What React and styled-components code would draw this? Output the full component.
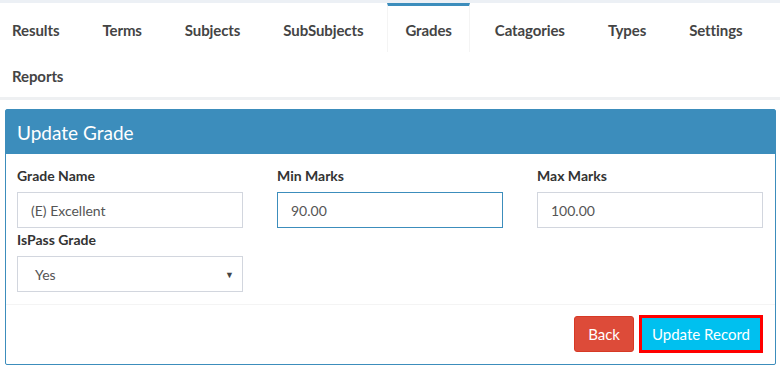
import React from "react";
import styled, { createGlobalStyle } from "styled-components";

const GlobalStyle = createGlobalStyle`
  body {
    margin: 0;
    background: #fff;
    font-family: Lato, "Liberation Sans", sans-serif;
    color: #333;
  }
`;

const Page = styled.div`
  width: 780px;
  height: 367px;
  overflow: hidden;
  border-top: 3px solid #ecf0f5;
  box-sizing: border-box;
`;

const Nav = styled.ul`
  list-style: none;
  margin: 0 0 0 -6px;
  padding: 0;
  display: flex;
  flex-wrap: wrap;
  border-bottom: 3px solid #eef0f2;
  width: 786px;
`;

const Tab = styled.li`
  height: ${p => (p.first ? "49px" : "45px")};
  padding: ${p => (p.first ? "1px" : "0")} 17px 0;
  margin-right: 7px;
  box-sizing: border-box;
  display: flex;
  align-items: center;
  font-size: 15px;
  font-weight: 700;
  letter-spacing: -0.1px;
  color: #444;
  border-top: 3px solid ${p => (p.active ? "#3c8dbc" : "transparent")};
  border-left: 1px solid ${p => (p.active ? "#f4f4f4" : "transparent")};
  border-right: 1px solid ${p => (p.active ? "#f4f4f4" : "transparent")};
  margin-left: ${p => (p.active ? "-1px" : "0")};
`;

const Panel = styled.section`
  margin: 9px 4px 0 5px;
  border: 1px solid #3c8dbc;
  border-radius: 2px;
  background: #fff;
`;

const PanelHeader = styled.h3`
  margin: 0;
  height: 44px;
  padding: 0 11px;
  display: flex;
  align-items: center;
  background: #3c8dbc;
  color: #fff;
  font-size: 19px;
  font-weight: 400;
`;

const PanelBody = styled.div`
  padding: 13px 12px 12px 11px;
  display: grid;
  grid-template-columns: repeat(3, 226px);
  column-gap: 34px;
  row-gap: 3px;
  border-bottom: 1px solid #f4f4f4;
`;

const Field = styled.div`
  display: flex;
  flex-direction: column;
`;

const Label = styled.label`
  font-size: 14px;
  font-weight: 700;
  color: #333;
  height: 17px;
  line-height: 17px;
  margin-bottom: 8px;
`;

const Input = styled.div`
  height: 36px;
  box-sizing: border-box;
  border: 1px solid ${p => (p.focused ? "#3c8dbc" : "#d2d6de")};
  padding: 0 13px;
  display: flex;
  align-items: center;
  justify-content: space-between;
  font-size: 14px;
  color: #555;
`;

const SelectValue = styled.span`
  padding-left: 4px;
`;

const Caret = styled.span`
  font-size: 9px;
  color: #444;
  margin-right: -5px;
`;

const Footer = styled.div`
  display: flex;
  justify-content: flex-end;
  gap: 5px;
  padding: 11px 12px 11px 11px;
`;

const Button = styled.button`
  height: ${p => (p.outlined ? "38px" : "36px")};
  margin-top: ${p => (p.outlined ? "-1px" : "0")};
  padding: 0 ${p => (p.outlined ? "10px" : "13px")};
  border: ${p => (p.outlined ? "3px solid #ff0000" : "1px solid #d73925")};
  border-radius: ${p => (p.outlined ? "0" : "3px")};
  background: ${p => p.bg};
  color: #fff;
  font-family: inherit;
  font-size: 15px;
`;

const tabs = ["Results", "Terms", "Subjects", "SubSubjects", "Grades", "Catagories", "Types", "Settings", "Reports"];

export default function App() {
  return (
    <>
      <GlobalStyle />
      <Page>
        <Nav>
          {tabs.map((t, i) => (
            <Tab key={t} first={i < 8} active={t === "Grades"}>{t}</Tab>
          ))}
        </Nav>
        <Panel>
          <PanelHeader>Update Grade</PanelHeader>
          <PanelBody>
            <Field>
              <Label>Grade Name</Label>
              <Input>(E) Excellent</Input>
            </Field>
            <Field>
              <Label>Min Marks</Label>
              <Input focused>90.00</Input>
            </Field>
            <Field>
              <Label>Max Marks</Label>
              <Input>100.00</Input>
            </Field>
            <Field>
              <Label>IsPass Grade</Label>
              <Input>
                <SelectValue>Yes</SelectValue>
                <Caret>▼</Caret>
              </Input>
            </Field>
          </PanelBody>
          <Footer>
            <Button bg="#dd4b39">Back</Button>
            <Button bg="#00c0ef" outlined>Update Record</Button>
          </Footer>
        </Panel>
      </Page>
    </>
  );
}
